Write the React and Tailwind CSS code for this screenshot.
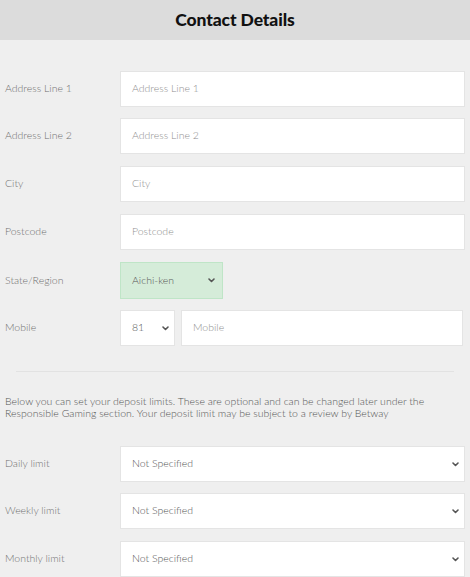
import React from "react";

const Chevron = ({ className = "" }) => (
  <svg width="7" height="5" viewBox="0 0 7 5" className={className}>
    <path d="M1 1 L3.5 3.5 L6 1" fill="none" stroke="#555" strokeWidth="1.6" strokeLinecap="round" strokeLinejoin="round" />
  </svg>
);

const Row = ({ label, children, className = "" }) => (
  <div className={`flex items-center h-[36px] ${className}`}>
    <div className="w-[120px] pl-[5px] text-[10.5px] font-light text-[#6f6f6f]">{label}</div>
    <div className="flex-1 flex h-full">{children}</div>
  </div>
);

const TextBox = ({ placeholder }) => (
  <div className="flex-1 h-full bg-white border border-[#e4e4e4] flex items-center pl-[11px] text-[10.5px] font-light text-[#8f8f8f]">
    {placeholder}
  </div>
);

const SelectBox = ({ value }) => (
  <div className="flex-1 h-full bg-white border border-[#e4e4e4] flex items-center justify-between pl-[11px] pr-[5px] text-[10.5px] font-light text-[#555]">
    <span>{value}</span>
    <Chevron />
  </div>
);

export default function App() {
  return (
    <div
      className="w-[470px] h-[577px] overflow-hidden bg-[#efefef]"
      style={{ fontFamily: "Lato, 'Open Sans', sans-serif" }}
    >
      <div className="h-[40px] bg-[#dcdcdc] flex items-center justify-center">
        <h1 className="text-[17.5px] font-black text-[#111] tracking-[-0.1px]">Contact Details</h1>
      </div>

      <div className="pt-[31px] pr-[5px] flex flex-col">
        <Row label="Address Line 1">
          <TextBox placeholder="Address Line 1" />
        </Row>
        <Row label="Address Line 2" className="mt-[11px]">
          <TextBox placeholder="Address Line 2" />
        </Row>
        <Row label="City" className="mt-[12px]">
          <TextBox placeholder="City" />
        </Row>
        <Row label="Postcode" className="mt-[12px]">
          <TextBox placeholder="Postcode" />
        </Row>
        <Row label="State/Region" className="mt-[12px] !h-[37px]">
          <div className="w-[103px] h-full bg-[#d5ecd9] border border-[#bfe5c7] flex items-center justify-between pl-[11px] pr-[7px] text-[10.5px] font-light text-[#555]">
            <span>Aichi-ken</span>
            <Chevron />
          </div>
        </Row>
        <Row label="Mobile" className="mt-[11px]">
          <div className="w-[55px] h-full bg-white border border-[#e4e4e4] flex items-center justify-between pl-[11px] pr-[5px] text-[10.5px] font-light text-[#555]">
            <span>81</span>
            <Chevron />
          </div>
          <div className="flex-1 ml-[6px] mr-[2px] h-full bg-white border border-[#e4e4e4] flex items-center pl-[11px] text-[10.5px] font-light text-[#8f8f8f]">
            Mobile
          </div>
        </Row>
      </div>

      <div className="mt-[25px] mx-[16px] h-px bg-[#e2e2e2]" />

      <p className="mt-[24px] pl-[5px] pr-[10px] text-[10.5px] leading-[11.5px] font-light text-[#555]">
        Below you can set your deposit limits. These are optional and can be changed later under the Responsible Gaming section. Your deposit limit may be subject to a review by Betway
      </p>

      <div className="pt-[27px] pr-[5px] flex flex-col">
        <Row label="Daily limit">
          <SelectBox value="Not Specified" />
        </Row>
        <Row label="Weekly limit" className="mt-[11px]">
          <SelectBox value="Not Specified" />
        </Row>
        <Row label="Monthly limit" className="mt-[12px]">
          <SelectBox value="Not Specified" />
        </Row>
      </div>
    </div>
  );
}
